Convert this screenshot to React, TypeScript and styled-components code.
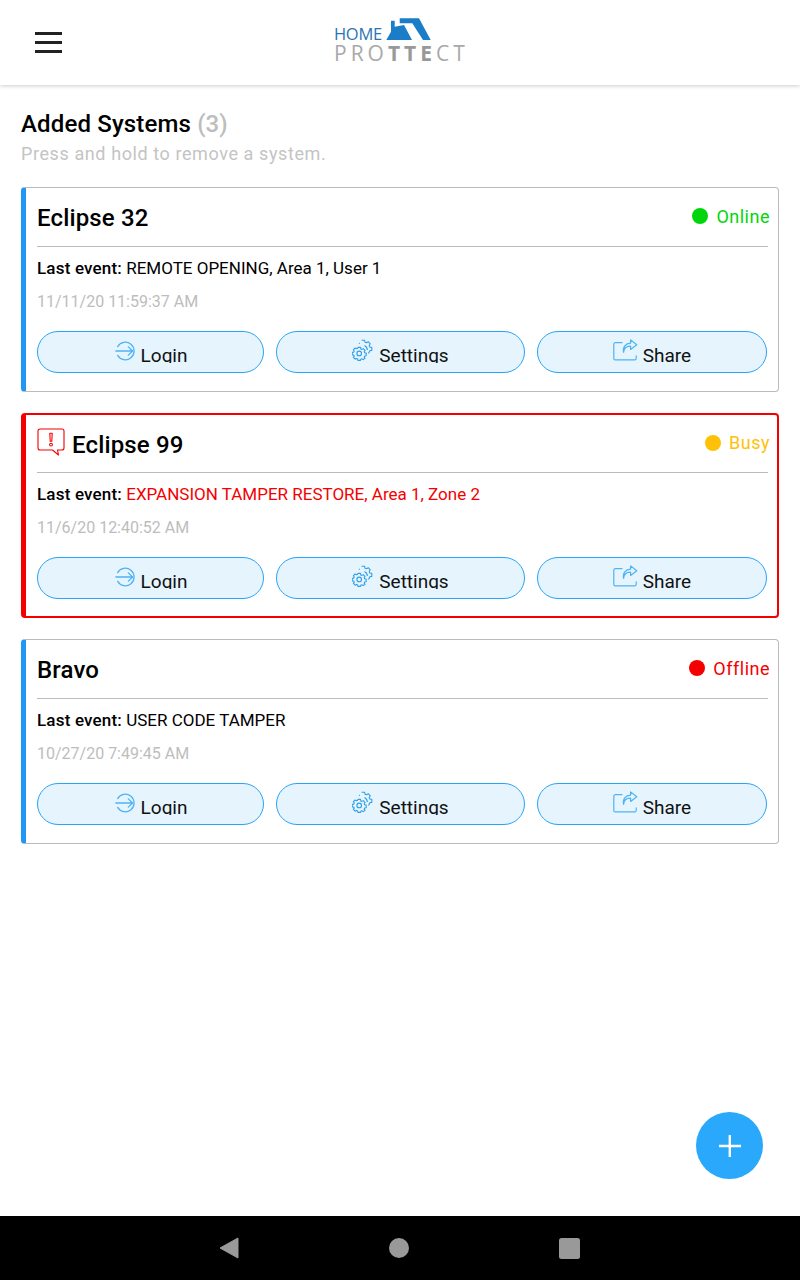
import React from 'react';
import styled, { createGlobalStyle } from 'styled-components';

const GlobalStyle = createGlobalStyle`
  html, body {
    margin: 0;
    padding: 0;
    background: #fff;
  }
  * {
    box-sizing: border-box;
  }
  body {
    font-family: Roboto, "Noto Sans", sans-serif;
    color: #000;
  }
`;

const Page = styled.div`
  width: 800px;
  height: 1280px;
  display: flex;
  flex-direction: column;
  position: relative;
  overflow: hidden;
`;

const Header = styled.header`
  height: 85px;
  flex: none;
  display: flex;
  align-items: center;
  justify-content: center;
  position: relative;
  background: #fff;
  box-shadow: 0 1px 4px rgba(0, 0, 0, 0.2);
`;

const MenuButton = styled.div`
  position: absolute;
  left: 35px;
  top: 32px;
  width: 27px;
  height: 21px;
  display: flex;
  flex-direction: column;
  justify-content: space-between;

  span {
    display: block;
    height: 3px;
    background: #222;
  }
`;

const Logo = styled.div`
  position: relative;
  width: 132px;
  height: 48px;
  margin-top: -4px;
`;

const LogoHome = styled.span`
  position: absolute;
  left: 0;
  top: 9px;
  font-family: "Open Sans", sans-serif;
  font-size: 16.5px;
  line-height: 16px;
  letter-spacing: -0.3px;
  color: #2a74b5;
`;

const LogoProtect = styled.span`
  position: absolute;
  left: 0;
  top: 26px;
  font-family: "Open Sans", sans-serif;
  font-size: 21px;
  line-height: 20px;
  letter-spacing: 4px;
  color: #a9a9a9;
  white-space: nowrap;

  b {
    font-weight: 700;
    color: #999;
  }
`;

const LogoRoof = styled.svg`
  position: absolute;
  left: 51px;
  top: 0;
`;

const Content = styled.main`
  flex: 1;
  padding: 24px 21px 0;
`;

const Title = styled.h1`
  margin: 0;
  font-size: 24px;
  line-height: 30px;
  font-weight: 500;
  letter-spacing: 0.15px;

  span {
    color: #bdbdbd;
  }
`;

const Hint = styled.p`
  margin: 0 0 18px;
  font-size: 18px;
  line-height: 30px;
  letter-spacing: 0.59px;
  color: #c4c4c4;
`;

const CardList = styled.div`
  display: flex;
  flex-direction: column;
  gap: 21px;
`;

const Card = styled.section<{ $alert?: boolean }>`
  height: 205px;
  border-radius: 4px;
  border: ${(p) => (p.$alert ? '2px solid #f50000' : '1px solid #bbb')};
  border-left: 5px solid ${(p) => (p.$alert ? '#f50000' : '#2196f3')};
  padding: ${(p) => (p.$alert ? '0 9px 0 11px' : '0 10px 0 11px')};
`;

const CardHead = styled.div<{ $alert?: boolean }>`
  height: ${(p) => (p.$alert ? '58px' : '59px')};
  display: flex;
  align-items: center;
  justify-content: space-between;
  border-bottom: 1px solid #bbb;
`;

const CardName = styled.div`
  display: flex;
  align-items: center;
  gap: 7px;
  margin-top: 2px;
  font-size: 24px;
  line-height: 30px;
  font-weight: 500;
  letter-spacing: 0.15px;

  svg {
    margin-top: -5px;
  }
`;

const Status = styled.div<{ $color: string }>`
  display: flex;
  align-items: center;
  gap: 8px;
  margin-right: -2px;
  margin-top: -2px;
  font-size: 18px;
  letter-spacing: 0.5px;
  color: ${(p) => p.$color};

  i {
    width: 16px;
    height: 16px;
    border-radius: 50%;
    background: ${(p) => p.$color};
  }
`;

const EventLine = styled.div`
  margin-top: 11px;
  font-size: 17px;
  line-height: 20px;

  strong {
    font-weight: 500;
    letter-spacing: 0.18px;
  }
`;

const EventText = styled.span<{ $alert?: boolean }>`
  color: ${(p) => (p.$alert ? '#f50000' : '#000')};
`;

const Stamp = styled.div`
  margin-top: 14px;
  font-size: 16px;
  line-height: 20px;
  color: #bdbdbd;
`;

const Actions = styled.div`
  margin-top: 19px;
  display: grid;
  grid-template-columns: 227px 249px 230px;
  column-gap: 12px;
  margin-right: -1px;
`;

const ActionButton = styled.div`
  height: 42px;
  border: 1px solid #29a5f7;
  border-radius: 21px;
  background: #e6f4fe;
  display: flex;
  justify-content: center;
  align-items: flex-start;
  gap: 5px;
  padding-top: 7px;
  overflow: hidden;

  svg {
    flex: none;
  }
`;

/* the reference clips the descenders of the labels, so the height is kept short */
const ActionLabel = styled.span`
  display: block;
  height: 22px;
  margin-top: 2px;
  overflow: hidden;
  font-size: 19px;
  line-height: 30px;
  color: #111;
`;

const Fab = styled.div`
  position: absolute;
  left: 696px;
  top: 1112px;
  width: 67px;
  height: 67px;
  border-radius: 50%;
  background: #29a8fc;
  display: flex;
  align-items: center;
  justify-content: center;
`;

const NavBar = styled.nav`
  height: 64px;
  flex: none;
  background: #000;
  display: flex;
  align-items: center;
  justify-content: center;
  gap: 150px;
  padding-right: 1px;
`;

const LoginIcon = () => (
  <svg width="22" height="24" viewBox="0 0 24 24" fill="none" stroke="#4db3f7" strokeWidth="1.4" strokeLinecap="round" strokeLinejoin="round">
    <path d="M4 7.2A9.6 9.6 0 1 1 4 16.8" />
    <path d="M2 12h18.4M15.6 7.5l4.8 4.5-4.8 4.5" />
  </svg>
);

const SettingsIcon = () => (
  <svg width="22" height="22" viewBox="0 0 22 22" fill="none" stroke="#2f9fe8" strokeWidth="1.1" strokeLinejoin="round">
    <path d="M9.6 1.2h3l.4 2 1.5.6 1.7-1.1 2.1 2.1-1.1 1.7.6 1.5 2 .4v3l-2 .4-.6 1.5-1 1" />
    <path d="M7 4.6l.8-.6" />
    <path d="M12.5 6.5a5 5 0 0 1 2.8 4.6" />
    <circle cx="7.2" cy="14.4" r="2.3" />
    <path d="M5.9 8.4h2.6l.3 1.5 1.1.5 1.3-.8 1.8 1.8-.8 1.3.5 1.1 1.5.3v2.6l-1.5.3-.5 1.1.8 1.3-1.8 1.2-1.3-.8-1.1.5-.3 1.1H5.9l-.3-1.5-1.1-.5-1.3.8-1.8-1.8.8-1.3-.5-1.1L.2 16v-2.6l1.5-.3.5-1.1-.8-1.3L3.2 9l1.3.8 1.1-.5z" />
  </svg>
);

const ShareIcon = () => (
  <svg width="25" height="22" viewBox="0 0 25 22" fill="none" stroke="#4db3f7" strokeWidth="1.2" strokeLinecap="round" strokeLinejoin="round">
    <path d="M9 3.6H2.2A1.6 1.6 0 0 0 .8 5.2v14.2c0 .9.6 1.5 1.4 1.5h19.6c.8 0 1.4-.6 1.4-1.5v-2.6" />
    <path d="M10.6 13.4c.2-4 3-6.2 7-6.2V10.4L23.8 5.8 17.6.9v3.2c-5 .2-8.2 4-7 9.3z" />
  </svg>
);

const AlertIcon = () => (
  <svg width="28" height="28" viewBox="0 0 28 28" fill="none" stroke="#f50000" strokeWidth="1.1" strokeLinejoin="round">
    <path d="M3 1h22a2 2 0 0 1 2 2v17a2 2 0 0 1-2 2h-4.5l1 5-6-5H3a2 2 0 0 1-2-2V3a2 2 0 0 1 2-2z" />
    <path d="M12.8 5.2h2.4l-.4 8h-1.6z" />
    <circle cx="14" cy="16.6" r="1.4" />
  </svg>
);

const systems = [
  { name: 'Eclipse 32', status: 'Online', color: '#00d60b', event: 'REMOTE OPENING, Area 1, User 1', time: '11/11/20 11:59:37 AM' },
  { name: 'Eclipse 99', status: 'Busy', color: '#ffc107', event: 'EXPANSION TAMPER RESTORE, Area 1, Zone 2', time: '11/6/20 12:40:52 AM', alert: true },
  { name: 'Bravo', status: 'Offline', color: '#f50000', event: 'USER CODE TAMPER', time: '10/27/20 7:49:45 AM' },
];

export default function App() {
  return (
    <Page>
      <GlobalStyle />
      <Header>
        <MenuButton>
          <span />
          <span />
          <span />
        </MenuButton>
        <Logo>
          <LogoHome>HOME</LogoHome>
          <LogoRoof width="48" height="26" viewBox="0 0 48 26">
            <path d="M1.3 23L6 14.7V3.7h3.7v6L19 8l8 15z" fill="#1b7dc8" />
            <path d="M14.7 1.3H34L45.7 23H38L27.3 6.3H14.7z" fill="#1b7dc8" />
          </LogoRoof>
          <LogoProtect>
            PRO<b>TTE</b>CT
          </LogoProtect>
        </Logo>
      </Header>
      <Content>
        <Title>
          Added Systems <span>(3)</span>
        </Title>
        <Hint>Press and hold to remove a system.</Hint>
        <CardList>
          {systems.map((s) => (
            <Card key={s.name} $alert={s.alert}>
              <CardHead $alert={s.alert}>
                <CardName>
                  {s.alert && <AlertIcon />}
                  {s.name}
                </CardName>
                <Status $color={s.color}>
                  <i />
                  {s.status}
                </Status>
              </CardHead>
              <EventLine>
                <strong>Last event:</strong> <EventText $alert={s.alert}>{s.event}</EventText>
              </EventLine>
              <Stamp>{s.time}</Stamp>
              <Actions>
                <ActionButton>
                  <LoginIcon />
                  <ActionLabel>Login</ActionLabel>
                </ActionButton>
                <ActionButton>
                  <SettingsIcon />
                  <ActionLabel>Settings</ActionLabel>
                </ActionButton>
                <ActionButton>
                  <ShareIcon />
                  <ActionLabel>Share</ActionLabel>
                </ActionButton>
              </Actions>
            </Card>
          ))}
        </CardList>
      </Content>
      <Fab>
        <svg width="22" height="22" viewBox="0 0 22 22">
          <path d="M9.6 0H12v22H9.6zM0 9.8h22v2.4H0z" fill="#fff" />
        </svg>
      </Fab>
      <NavBar>
        <svg width="20" height="22" viewBox="0 0 20 22">
          <path d="M19 1v20L1 11z" fill="#999" stroke="#999" strokeLinejoin="round" />
        </svg>
        <svg width="20" height="20" viewBox="0 0 20 20">
          <circle cx="10" cy="10" r="10" fill="#999" />
        </svg>
        <svg width="21" height="21" viewBox="0 0 21 21">
          <rect width="21" height="21" rx="2.5" fill="#999" />
        </svg>
      </NavBar>
    </Page>
  );
}
